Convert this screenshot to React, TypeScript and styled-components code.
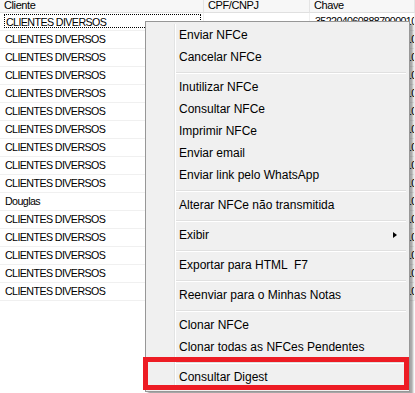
import { Fragment } from 'react'
import styled, { createGlobalStyle } from 'styled-components'

const GlobalStyle = createGlobalStyle`
  html, body {
    margin: 0;
    padding: 0;
    background: #ffffff;
  }
  body {
    width: 415px;
    height: 393px;
    overflow: hidden;
    font-family: 'Liberation Sans', Arial, sans-serif;
  }
`

const Screen = styled.div`
  position: relative;
  width: 415px;
  height: 393px;
  overflow: hidden;
  background: #ffffff;
`

const Grid = styled.div`
  display: grid;
  grid-template-columns: 204px 106px 1fr;
  width: 415px;
`

const HeadCell = styled.div`
  height: 12px;
  background: #f7f7f7;
  border-right: 1px solid #e4e4e4;
  border-bottom: 1px solid #e0e0e0;
  padding-left: 4px;
  font-size: 11px;
  line-height: 10px;
  letter-spacing: -0.4px;
  color: #000;
  overflow: hidden;
  white-space: nowrap;
`

const Cell = styled.div`
  height: 17px;
  border-right: 1px solid #f0f0f0;
  border-bottom: 1px solid #f0f0f0;
  padding-left: 5px;
  font-size: 10.7px;
  line-height: 17px;
  letter-spacing: -0.6px;
  color: #000;
  overflow: hidden;
  white-space: nowrap;
`

const FocusCell = styled(Cell)`
  padding-left: 0;
  padding-top: 1px;
  height: 16px;
`

const FocusRect = styled.div`
  margin-left: 4px;
  margin-right: 2px;
  height: 14px;
  line-height: 14px;
  padding-left: 1px;
  border: 1px dotted #000;
  box-sizing: border-box;
`

const Menu = styled.div`
  position: absolute;
  left: 145px;
  top: 21px;
  width: 263px;
  padding: 2px 0 3px;
  background: #f0f0f0;
  border: 1px solid #979797;
  box-shadow: 3px 3px 2px rgba(0, 0, 0, 0.35);
  font-size: 12px;
  color: #000;
  &::before {
    content: '';
    position: absolute;
    left: 28px;
    top: 2px;
    bottom: 2px;
    width: 1px;
    background: #e2e3e3;
    box-shadow: 1px 0 0 #ffffff;
  }
`

const Item = styled.div`
  position: relative;
  display: flex;
  align-items: center;
  justify-content: space-between;
  height: 22px;
  padding: 0 12px 0 33px;
  white-space: pre;
`

const Separator = styled.div`
  height: 8px;
  display: flex;
  align-items: center;
  padding: 0 3px 0 30px;
  &::after {
    content: '';
    flex: 1;
    height: 1px;
    background: #e0e0e0;
    box-shadow: 0 1px 0 #ffffff;
  }
`

const Arrow = styled.span`
  width: 0;
  height: 0;
  border-top: 3.5px solid transparent;
  border-bottom: 3.5px solid transparent;
  border-left: 4px solid #000;
`

const Highlight = styled.div`
  position: absolute;
  left: 143px;
  top: 357px;
  width: 266px;
  height: 33px;
  box-sizing: border-box;
  border: 5px solid #ed1c24;
`

const clientes = [
  'CLIENTES DIVERSOS',
  'CLIENTES DIVERSOS',
  'CLIENTES DIVERSOS',
  'CLIENTES DIVERSOS',
  'CLIENTES DIVERSOS',
  'CLIENTES DIVERSOS',
  'CLIENTES DIVERSOS',
  'CLIENTES DIVERSOS',
  'CLIENTES DIVERSOS',
  'CLIENTES DIVERSOS',
  'Douglas',
  'CLIENTES DIVERSOS',
  'CLIENTES DIVERSOS',
  'CLIENTES DIVERSOS',
  'CLIENTES DIVERSOS',
  'CLIENTES DIVERSOS',
]

type Entry = { label?: string; sub?: boolean; sep?: boolean }

const menu: Entry[] = [
  { label: 'Enviar NFCe' },
  { label: 'Cancelar NFCe' },
  { sep: true },
  { label: 'Inutilizar NFCe' },
  { label: 'Consultar NFCe' },
  { label: 'Imprimir NFCe' },
  { label: 'Enviar email' },
  { label: 'Enviar link pelo WhatsApp' },
  { sep: true },
  { label: 'Alterar NFCe não transmitida' },
  { sep: true },
  { label: 'Exibir', sub: true },
  { sep: true },
  { label: 'Exportar para HTML  F7' },
  { sep: true },
  { label: 'Reenviar para o Minhas Notas' },
  { sep: true },
  { label: 'Clonar NFCe' },
  { label: 'Clonar todas as NFCes Pendentes' },
  { sep: true },
  { label: 'Consultar Digest' },
]

const App = () => {
  return (
    <Screen>
      <GlobalStyle />
      <Grid>
        <HeadCell>Cliente</HeadCell>
        <HeadCell>CPF/CNPJ</HeadCell>
        <HeadCell>Chave</HeadCell>
        {clientes.map((nome, i) => (
          <Fragment key={i}>
            {i === 0 ? (
              <FocusCell>
                <FocusRect>{nome}</FocusRect>
              </FocusCell>
            ) : (
              <Cell>{nome}</Cell>
            )}
            <Cell />
            <Cell>35220406088879000100650010000</Cell>
          </Fragment>
        ))}
      </Grid>
      <Menu>
        {menu.map((m, i) =>
          m.sep ? (
            <Separator key={i} />
          ) : (
            <Item key={i}>
              {m.label}
              {m.sub && <Arrow />}
            </Item>
          )
        )}
      </Menu>
      <Highlight />
    </Screen>
  )
}

export default App
